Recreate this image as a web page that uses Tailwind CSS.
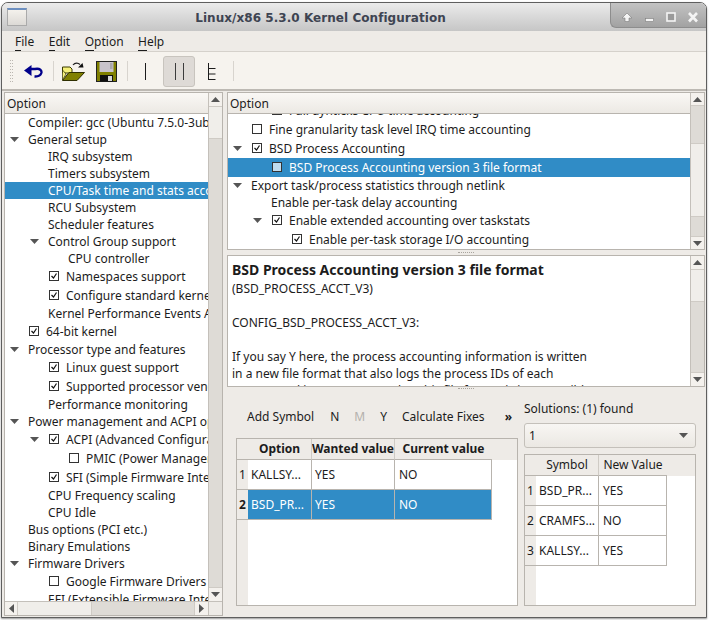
<!DOCTYPE html>
<html><head><meta charset="utf-8">
<script src="https://cdn.jsdelivr.net/npm/@tailwindcss/browser@4"></script>
</head>
<body class="m-0 bg-white">
<div class="w-[709px] h-[620px] overflow-hidden font-['Noto_Sans',sans-serif] text-[12px] leading-[17px] text-[#1c1c1c] bg-white pl-px pt-[2px] pr-[2px] pb-[2px]">
<div class="h-full flex flex-col border border-[#5f5f5f] rounded-t-[7px] overflow-hidden bg-[#eeebe7] shadow-[0_1px_2px_#999]">

  <!-- title bar -->
  <div class="h-[28px] shrink-0 flex items-center bg-gradient-to-b from-[#ebebeb] to-[#c6c6c6] relative">
    <div class="ml-[5px] w-[20px] h-[18px] border border-[#aaa] bg-gradient-to-b from-[#f4f1ec] to-[#dcdad6] border-t-[2px] border-t-[#6c8fc0]"></div>
    <div class="flex-1 text-center font-['DejaVu_Sans',sans-serif] font-bold text-[12px] text-[#3e4452] tracking-[0.05px] pr-[92px] pt-[2px]">Linux/x86 5.3.0 Kernel Configuration</div>
    <div class="absolute right-0 top-0 w-[96px] h-[25px] rounded-bl-[6px] border-l border-b border-[#8d8d8d] bg-gradient-to-b from-[#c3c3c3] to-[#a2a2a2] flex items-center">
      <svg class="shrink-0" width="95" height="24" viewBox="0 0 95 24" fill="none">
        <path d="M11 15 L16 10 L21 15 H18 V18.5 H14 V15 Z" fill="#f4f4f4" stroke="#7d7d7d" stroke-width="0.6"/>
        <rect x="34.5" y="15.5" width="8" height="3" fill="#f4f4f4" stroke="#7d7d7d" stroke-width="0.6"/>
        <rect x="56" y="10" width="8" height="8" fill="#9a9a9a" stroke="#f4f4f4" stroke-width="1.6"/>
        <path d="M78 10 L86 18.5 M86 10 L78 18.5" stroke="#f4f4f4" stroke-width="2.6"/>
      </svg>
    </div>
  </div>

  <!-- menu -->
  <div class="h-[21px] shrink-0 flex items-center pl-[13px] gap-[14.5px] border-b border-[#d5d1cb]">
    <span><u class="no-underline border-b border-[#1c1c1c]">F</u>ile</span>
    <span><u class="no-underline border-b border-[#1c1c1c]">E</u>dit</span>
    <span><u class="no-underline border-b border-[#1c1c1c]">O</u>ption</span>
    <span><u class="no-underline border-b border-[#1c1c1c]">H</u>elp</span>
  </div>

  <!-- toolbar -->
  <div class="h-[39px] shrink-0 flex items-center bg-[#f6f3ee] border-b-[2px] border-[#bdb9b3] pt-px">
    <svg class="ml-[7px] shrink-0" width="5" height="24" viewBox="0 0 5 24"><path d="M1 1.5h3M1 4.5h3M1 7.5h3M1 10.5h3M1 13.5h3M1 16.5h3M1 19.5h3M1 22.5h3" stroke="#bbb7b1" stroke-dasharray="1 1"/></svg>
    <svg class="ml-[10px] shrink-0" width="19" height="13" viewBox="0 0 19 13" fill="none"><path d="M0 5.5 L7.5 0 V11 Z" fill="#00008b"/><path d="M6 4 H11 C16 3 18 5.5 17.3 8 C16.5 10.5 14 11.7 10.5 11.5" stroke="#00008b" stroke-width="2.4"/></svg>
    <div class="ml-[10px] w-px h-[20px] shrink-0 bg-[#d8d4ce]"></div>
    <svg class="ml-[8px] shrink-0" width="23" height="19" viewBox="0 0 23 19" fill="none">
      <path d="M0.5 5 H8 L10 7 V11 H0.5 Z" fill="#f5f07a" stroke="#3a3a00"/>
      <path d="M0.5 18.5 L7 10.5 H22.5 L15 18.5 Z" fill="#808000" stroke="#2f2f00"/>
      <path d="M0.5 18 V8 L4 12 Z" fill="#f5f07a" stroke="#2f2f00" stroke-width="0.7"/>
      <path d="M11 3 C13 0.5 16 0.5 18 2.5" stroke="#222" stroke-width="1.2"/>
      <path d="M21.5 5.5 L16 5.5 L20.5 1 Z" fill="#111"/>
    </svg>
    <svg class="ml-[11px] shrink-0" width="21" height="21" viewBox="0 0 21 21">
      <rect x="0.5" y="0.5" width="20" height="20" fill="#808000" stroke="#222"/>
      <rect x="3.5" y="1" width="14" height="10" fill="#c8c3cb"/>
      <rect x="14" y="2" width="2.5" height="6" fill="#808080" opacity="0.4"/>
      <rect x="4" y="14" width="13" height="6.5" fill="#111"/>
      <rect x="12" y="15" width="4" height="5" fill="#d8d8d8"/>
    </svg>
    <div class="ml-[10px] w-px h-[20px] shrink-0 bg-[#d8d4ce]"></div>
    <div class="w-[35px] h-[32px] flex items-center justify-center">
      <div class="w-px h-[17px] bg-[#1c1c1c]"></div>
    </div>
    <div class="w-[32px] h-[31px] rounded-[3px] border border-[#c8c4be] bg-[#dedad6] flex items-center justify-center gap-[7px]">
      <div class="w-px h-[17px] bg-[#3c3c3c]"></div><div class="w-px h-[17px] bg-[#3c3c3c]"></div>
    </div>
    <div class="w-[32px] h-[32px] flex items-center justify-center">
      <svg class="shrink-0" width="9" height="17" viewBox="0 0 9 17"><path d="M1.5 0V17M1.5 5.5H8.5M1.5 11H8.5M1.5 16.5H8.5" stroke="#1c1c1c" fill="none"/></svg>
    </div>
    <div class="ml-[6px] w-px h-[20px] shrink-0 bg-[#d8d4ce]"></div>
  </div>

  <!-- main -->
  <div class="flex-1 min-h-0 flex pl-[2px] pr-px pt-[1px] pb-[1px] gap-[4px]">

    <!-- left tree -->
    <div class="w-[219px] shrink-0 flex flex-col border border-[#b8b4ae] bg-white">
      <div class="flex-1 min-h-0 flex">
        <div class="flex-1 min-w-0 flex flex-col">
          <div class="h-[21px] shrink-0 px-[2px] flex items-center bg-gradient-to-b from-[#faf8f5] to-[#ece9e4] border-b border-[#b8b4ae]">Option</div>
          <div class="flex-1 min-h-0 overflow-hidden whitespace-nowrap bg-white">
            <div class="h-[17px] pl-[23px] flex items-center">Compiler: gcc (Ubuntu 7.5.0-3ubuntu1~18.04) 7.5.0</div>
            <div class="h-[17px] pl-[5px] flex items-center"><svg class="w-[18px] shrink-0" height="6" viewBox="0 0 18 6"><path d="M0 0H9L4.5 5Z" fill="#555"/></svg>General setup</div>
            <div class="h-[17px] pl-[43px] flex items-center">IRQ subsystem</div>
            <div class="h-[17px] pl-[43px] flex items-center">Timers subsystem</div>
            <div class="h-[17px] pl-[43px] flex items-center bg-[#308cc6] text-white">CPU/Task time and stats accounting</div>
            <div class="h-[17px] pl-[43px] flex items-center">RCU Subsystem</div>
            <div class="h-[17px] pl-[43px] flex items-center">Scheduler features</div>
            <div class="h-[17px] pl-[25px] flex items-center"><svg class="w-[18px] shrink-0" height="6" viewBox="0 0 18 6"><path d="M0 0H9L4.5 5Z" fill="#555"/></svg>Control Group support</div>
            <div class="h-[17px] pl-[63px] flex items-center">CPU controller</div>
            <div class="h-[19px] pl-[44px] flex items-center"><svg class="w-[17px] shrink-0" height="11" viewBox="0 0 17 11" fill="none"><rect x="0.5" y="0.5" width="9" height="9" stroke="#333"/><path d="M2.5 5L4.5 7L7.5 2.5" stroke="#111" stroke-width="1.2"/></svg>Namespaces support</div>
            <div class="h-[19px] pl-[44px] flex items-center"><svg class="w-[17px] shrink-0" height="11" viewBox="0 0 17 11" fill="none"><rect x="0.5" y="0.5" width="9" height="9" stroke="#333"/><path d="M2.5 5L4.5 7L7.5 2.5" stroke="#111" stroke-width="1.2"/></svg>Configure standard kernel features</div>
            <div class="h-[17px] pl-[43px] flex items-center">Kernel Performance Events And Counters</div>
            <div class="h-[19px] pl-[24px] flex items-center"><svg class="w-[17px] shrink-0" height="11" viewBox="0 0 17 11" fill="none"><rect x="0.5" y="0.5" width="9" height="9" stroke="#333"/><path d="M2.5 5L4.5 7L7.5 2.5" stroke="#111" stroke-width="1.2"/></svg>64-bit kernel</div>
            <div class="h-[17px] pl-[5px] flex items-center"><svg class="w-[18px] shrink-0" height="6" viewBox="0 0 18 6"><path d="M0 0H9L4.5 5Z" fill="#555"/></svg>Processor type and features</div>
            <div class="h-[19px] pl-[44px] flex items-center"><svg class="w-[17px] shrink-0" height="11" viewBox="0 0 17 11" fill="none"><rect x="0.5" y="0.5" width="9" height="9" stroke="#333"/><path d="M2.5 5L4.5 7L7.5 2.5" stroke="#111" stroke-width="1.2"/></svg>Linux guest support</div>
            <div class="h-[19px] pl-[44px] flex items-center"><svg class="w-[17px] shrink-0" height="11" viewBox="0 0 17 11" fill="none"><rect x="0.5" y="0.5" width="9" height="9" stroke="#333"/><path d="M2.5 5L4.5 7L7.5 2.5" stroke="#111" stroke-width="1.2"/></svg>Supported processor vendors</div>
            <div class="h-[17px] pl-[43px] flex items-center">Performance monitoring</div>
            <div class="h-[17px] pl-[5px] flex items-center"><svg class="w-[18px] shrink-0" height="6" viewBox="0 0 18 6"><path d="M0 0H9L4.5 5Z" fill="#555"/></svg>Power management and ACPI options</div>
            <div class="h-[19px] pl-[25px] flex items-center"><svg class="w-[19px] shrink-0" height="6" viewBox="0 0 19 6"><path d="M0 0H9L4.5 5Z" fill="#555"/></svg><svg class="w-[17px] shrink-0" height="11" viewBox="0 0 17 11" fill="none"><rect x="0.5" y="0.5" width="9" height="9" stroke="#333"/><path d="M2.5 5L4.5 7L7.5 2.5" stroke="#111" stroke-width="1.2"/></svg>ACPI (Advanced Configuration and Power)</div>
            <div class="h-[19px] pl-[64px] flex items-center"><svg class="w-[17px] shrink-0" height="11" viewBox="0 0 17 11" fill="none"><rect x="0.5" y="0.5" width="9" height="9" stroke="#333"/></svg>PMIC (Power Management Integrated)</div>
            <div class="h-[19px] pl-[44px] flex items-center"><svg class="w-[17px] shrink-0" height="11" viewBox="0 0 17 11" fill="none"><rect x="0.5" y="0.5" width="9" height="9" stroke="#333"/><path d="M2.5 5L4.5 7L7.5 2.5" stroke="#111" stroke-width="1.2"/></svg>SFI (Simple Firmware Interface) Support</div>
            <div class="h-[17px] pl-[43px] flex items-center">CPU Frequency scaling</div>
            <div class="h-[17px] pl-[43px] flex items-center">CPU Idle</div>
            <div class="h-[17px] pl-[23px] flex items-center">Bus options (PCI etc.)</div>
            <div class="h-[17px] pl-[23px] flex items-center">Binary Emulations</div>
            <div class="h-[17px] pl-[5px] flex items-center"><svg class="w-[18px] shrink-0" height="6" viewBox="0 0 18 6"><path d="M0 0H9L4.5 5Z" fill="#555"/></svg>Firmware Drivers</div>
            <div class="h-[19px] pl-[44px] flex items-center"><svg class="w-[17px] shrink-0" height="11" viewBox="0 0 17 11" fill="none"><rect x="0.5" y="0.5" width="9" height="9" stroke="#333"/></svg>Google Firmware Drivers</div>
            <div class="h-[17px] pl-[43px] flex items-center">EFI (Extensible Firmware Interface) Support</div>
          </div>
        </div>
        <div class="w-[14px] shrink-0 flex flex-col bg-[#dedbd6] border-l border-[#c4c0ba]">
          <div class="h-[14px] flex items-center justify-center bg-[#f4f1ed] border-b border-[#cfcbc5]"><svg width="9" height="5" viewBox="0 0 9 5"><path d="M0 5H9L4.5 0Z" fill="#555"/></svg></div>
          <div class="h-[32px] bg-[#f0eeea] border-b border-[#cfcbc5]"></div>
          <div class="flex-1"></div>
          <div class="h-[14px] flex items-center justify-center bg-[#f4f1ed] border-t border-[#cfcbc5]"><svg width="9" height="5" viewBox="0 0 9 5"><path d="M0 0H9L4.5 5Z" fill="#555"/></svg></div>
        </div>
      </div>
      <div class="h-[14px] shrink-0 flex bg-[#dedbd6] border-t border-[#c4c0ba]">
        <div class="w-[13px] flex items-center justify-center bg-[#f4f1ed] border-r border-[#cfcbc5]"><svg width="5" height="9" viewBox="0 0 5 9"><path d="M5 0V9L0 4.5Z" fill="#555"/></svg></div>
        <div class="w-[74px] bg-[#f0eeea] border-r border-[#cfcbc5]"></div>
        <div class="flex-1"></div>
        <div class="w-[14px] flex items-center justify-center bg-[#f4f1ed] border-l border-[#cfcbc5]"><svg width="5" height="9" viewBox="0 0 5 9"><path d="M0 0V9L5 4.5Z" fill="#555"/></svg></div>
        <div class="w-[14px] bg-[#eeebe7] border-l border-[#c4c0ba]"></div>
      </div>
    </div>

    <!-- right -->
    <div class="flex-1 min-w-0 flex flex-col">
      <!-- option tree -->
      <div class="h-[158px] shrink-0 flex border border-[#b8b4ae] bg-white">
        <div class="flex-1 min-w-0 flex flex-col">
          <div class="h-[21px] shrink-0 px-[2px] flex items-center bg-gradient-to-b from-[#faf8f5] to-[#ece9e4] border-b border-[#b8b4ae] relative z-10">Option</div>
          <div class="flex-1 min-h-0 overflow-hidden whitespace-nowrap">
            <div class="-mt-[13px]">
            <div class="h-[19px] pl-[44px] flex items-center"><svg class="w-[17px] shrink-0" height="11" viewBox="0 0 17 11" fill="none"><rect x="0.5" y="0.5" width="9" height="9" stroke="#333"/></svg>Full dynticks CPU time accounting</div>
            <div class="h-[19px] pl-[24px] flex items-center"><svg class="w-[17px] shrink-0" height="11" viewBox="0 0 17 11" fill="none"><rect x="0.5" y="0.5" width="9" height="9" stroke="#333"/></svg>Fine granularity task level IRQ time accounting</div>
            <div class="h-[19px] pl-[5px] flex items-center"><svg class="w-[19px] shrink-0" height="6" viewBox="0 0 19 6"><path d="M0 0H9L4.5 5Z" fill="#555"/></svg><svg class="w-[17px] shrink-0" height="11" viewBox="0 0 17 11" fill="none"><rect x="0.5" y="0.5" width="9" height="9" stroke="#333"/><path d="M2.5 5L4.5 7L7.5 2.5" stroke="#111" stroke-width="1.2"/></svg>BSD Process Accounting</div>
            <div class="h-[19px] pl-[44px] flex items-center bg-[#308cc6] text-white"><svg class="w-[17px] shrink-0" height="11" viewBox="0 0 17 11" fill="none"><rect x="0.5" y="0.5" width="9" height="9" fill="#c1dcee" stroke="#333"/></svg>BSD Process Accounting version 3 file format</div>
            <div class="h-[17px] pl-[5px] flex items-center"><svg class="w-[18px] shrink-0" height="6" viewBox="0 0 18 6"><path d="M0 0H9L4.5 5Z" fill="#555"/></svg>Export task/process statistics through netlink</div>
            <div class="h-[17px] pl-[43px] flex items-center">Enable per-task delay accounting</div>
            <div class="h-[19px] pl-[25px] flex items-center"><svg class="w-[19px] shrink-0" height="6" viewBox="0 0 19 6"><path d="M0 0H9L4.5 5Z" fill="#555"/></svg><svg class="w-[17px] shrink-0" height="11" viewBox="0 0 17 11" fill="none"><rect x="0.5" y="0.5" width="9" height="9" stroke="#333"/><path d="M2.5 5L4.5 7L7.5 2.5" stroke="#111" stroke-width="1.2"/></svg>Enable extended accounting over taskstats</div>
            <div class="h-[19px] pl-[64px] flex items-center"><svg class="w-[17px] shrink-0" height="11" viewBox="0 0 17 11" fill="none"><rect x="0.5" y="0.5" width="9" height="9" stroke="#333"/><path d="M2.5 5L4.5 7L7.5 2.5" stroke="#111" stroke-width="1.2"/></svg>Enable per-task storage I/O accounting</div>
            </div>
          </div>
        </div>
        <div class="w-[14px] shrink-0 flex flex-col bg-[#dedbd6] border-l border-[#c4c0ba]">
          <div class="h-[13px] flex items-center justify-center bg-[#f4f1ed] border-b border-[#cfcbc5]"><svg width="9" height="5" viewBox="0 0 9 5"><path d="M0 5H9L4.5 0Z" fill="#555"/></svg></div>
          <div class="h-[37px]"></div>
          <div class="h-[74px] bg-[#f0eeea] border-y border-[#cfcbc5]"></div>
          <div class="flex-1"></div>
          <div class="h-[13px] flex items-center justify-center bg-[#f4f1ed] border-t border-[#cfcbc5]"><svg width="9" height="5" viewBox="0 0 9 5"><path d="M0 0H9L4.5 5Z" fill="#555"/></svg></div>
        </div>
      </div>
      <!-- splitter -->
      <div class="h-[5px] shrink-0 flex items-center justify-center"><div class="w-[16px] h-px border-t border-dotted border-[#a8a49e]"></div></div>
      <!-- info -->
      <div class="h-[132px] shrink-0 flex border border-[#b8b4ae] bg-white">
        <div class="flex-1 min-w-0 overflow-hidden pl-[4px] pt-[4px] whitespace-nowrap">
          <div class="font-bold text-[14px] leading-[20px]">BSD Process Accounting version 3 file format</div>
          <div class="h-[17px]">(BSD_PROCESS_ACCT_V3)</div>
          <div class="mt-[17px] h-[17px]">CONFIG_BSD_PROCESS_ACCT_V3:</div>
          <div class="mt-[17px] h-[17px]">If you say Y here, the process accounting information is written</div>
          <div class="h-[17px]">in a new file format that also logs the process IDs of each</div>
          <div class="h-[17px]">process and its parent. Note that this file format is incompatible</div>
        </div>
        <div class="w-[14px] shrink-0 flex flex-col bg-[#dedbd6] border-l border-[#c4c0ba]">
          <div class="h-[14px] flex items-center justify-center bg-[#f4f1ed] border-b border-[#cfcbc5]"><svg width="9" height="5" viewBox="0 0 9 5"><path d="M0 5H9L4.5 0Z" fill="#555"/></svg></div>
          <div class="h-[32px] bg-[#f0eeea] border-b border-[#cfcbc5]"></div>
          <div class="flex-1"></div>
          <div class="h-[14px] flex items-center justify-center bg-[#f4f1ed] border-t border-[#cfcbc5]"><svg width="9" height="5" viewBox="0 0 9 5"><path d="M0 0H9L4.5 5Z" fill="#555"/></svg></div>
        </div>
      </div>
      <!-- splitter -->
      <div class="h-[3px] shrink-0 flex items-center justify-center"><div class="w-[16px] h-px border-t border-dotted border-[#a8a49e]"></div></div>

      <!-- bottom -->
      <div class="flex-1 min-h-0 flex pl-[9px] pr-[9px] pb-[10px]">
        <div class="w-[282px] shrink-0 flex flex-col">
          <div class="h-[48px] shrink-0 flex items-center pt-[4px] whitespace-nowrap">
            <span class="ml-[11px]">Add Symbol</span>
            <span class="ml-[16px]">N</span>
            <span class="ml-[15px] text-[#b4b1ad]">M</span>
            <span class="ml-[15px]">Y</span>
            <span class="ml-[15px]">Calculate Fixes</span>
            <span class="ml-[20px] font-bold">»</span>
          </div>
          <div class="flex-1 min-h-0 border border-[#b8b4ae] bg-white flex flex-col">
            <div class="h-[21px] shrink-0 flex bg-[#eeebe7] font-bold">
              <div class="w-[11px] border-b border-[#b8b4ae]"></div>
              <div class="w-[64px] text-center border-r border-b border-r-[#cfcbc5] border-b-[#b8b4ae] leading-[20px]">Option</div>
              <div class="w-[83px] border-r border-b border-r-[#cfcbc5] border-b-[#b8b4ae] leading-[20px] overflow-hidden whitespace-nowrap flex justify-end">Wanted value</div>
              <div class="w-[97px] text-center border-b border-[#b8b4ae] leading-[20px]">Current value</div>
            </div>
            <div class="flex-1 min-h-0 flex">
              <div class="w-[11px] shrink-0 bg-[#eeebe7] flex flex-col">
                <div class="h-[30px] flex items-center justify-center border-b border-[#b8b4ae]">1</div>
                <div class="h-[30px] flex items-center justify-center border-b border-[#b8b4ae] font-bold">2</div>
              </div>
              <div class="flex-1 min-w-0">
                <div class="w-[244px] h-[30px] flex border-b border-[#b8b4ae]">
                  <div class="w-[64px] pl-[3px] border-r border-[#b8b4ae] leading-[29px]">KALLSY...</div>
                  <div class="w-[83px] pl-[3px] border-r border-[#b8b4ae] leading-[29px]">YES</div>
                  <div class="w-[97px] pl-[4px] border-r border-[#b8b4ae] leading-[29px]">NO</div>
                </div>
                <div class="w-[244px] h-[30px] flex border-b border-[#b8b4ae] bg-[#308cc6] text-white">
                  <div class="w-[64px] pl-[3px] border-r border-[#b8b4ae] leading-[29px]">BSD_PR...</div>
                  <div class="w-[83px] pl-[3px] border-r border-[#b8b4ae] leading-[29px]">YES</div>
                  <div class="w-[97px] pl-[4px] border-r border-[#b8b4ae] leading-[29px]">NO</div>
                </div>
              </div>
            </div>
          </div>
        </div>
        <div class="ml-[6px] flex-1 min-w-0 flex flex-col">
          <div class="h-[33px] shrink-0 pt-[11px] leading-[15px] whitespace-nowrap">Solutions: (1) found</div>
          <div class="h-[25px] shrink-0 rounded-[3px] border border-[#c4c0ba] bg-gradient-to-b from-[#f8f6f3] to-[#ebe8e3] flex items-center justify-between pl-[4px] pr-[7px]">1<svg class="shrink-0" width="9" height="5" viewBox="0 0 9 5"><path d="M0 0H9L4.5 5Z" fill="#555"/></svg></div>
          <div class="mt-[6px] flex-1 min-h-0 border border-[#b8b4ae] bg-white flex flex-col">
            <div class="h-[21px] shrink-0 flex bg-[#eeebe7]">
              <div class="w-[11px] border-b border-[#b8b4ae]"></div>
              <div class="w-[63px] text-center border-r border-b border-r-[#cfcbc5] border-b-[#b8b4ae] leading-[20px]">Symbol</div>
              <div class="w-[68px] text-center border-b border-[#b8b4ae] leading-[20px]">New Value</div>
            </div>
            <div class="flex-1 min-h-0 flex">
              <div class="w-[11px] shrink-0 bg-[#eeebe7] flex flex-col">
                <div class="h-[30px] flex items-center justify-center border-b border-[#b8b4ae]">1</div>
                <div class="h-[30px] flex items-center justify-center border-b border-[#b8b4ae]">2</div>
                <div class="h-[30px] flex items-center justify-center border-b border-[#b8b4ae]">3</div>
              </div>
              <div class="flex-1 min-w-0">
                <div class="w-[131px] h-[30px] flex border-b border-[#b8b4ae]">
                  <div class="w-[63px] pl-[3px] border-r border-[#b8b4ae] leading-[29px]">BSD_PR...</div>
                  <div class="w-[68px] pl-[4px] border-r border-[#b8b4ae] leading-[29px]">YES</div>
                </div>
                <div class="w-[131px] h-[30px] flex border-b border-[#b8b4ae]">
                  <div class="w-[63px] pl-[3px] border-r border-[#b8b4ae] leading-[29px]">CRAMFS...</div>
                  <div class="w-[68px] pl-[4px] border-r border-[#b8b4ae] leading-[29px]">NO</div>
                </div>
                <div class="w-[131px] h-[30px] flex border-b border-[#b8b4ae]">
                  <div class="w-[63px] pl-[3px] border-r border-[#b8b4ae] leading-[29px]">KALLSY...</div>
                  <div class="w-[68px] pl-[4px] border-r border-[#b8b4ae] leading-[29px]">YES</div>
                </div>
              </div>
            </div>
          </div>
        </div>
      </div>
    </div>
  </div>
</div>
</div>
</body></html>
